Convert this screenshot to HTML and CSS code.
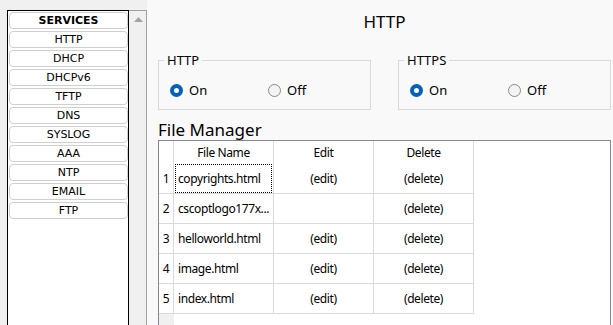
FILE: index.html
```html
<!DOCTYPE html>
<html lang="en">
<head>
    <meta charset="UTF-8">
    <title>HTTP Services</title>
    <link rel="stylesheet" href="styles.css">
</head>
<body>

    <div class="page">
        <div class="side">
            <div class="svc">
                <div class="svc-btn svc-head">SERVICES</div>
                <div class="svc-btn">HTTP</div>
                <div class="svc-btn">DHCP</div>
                <div class="svc-btn">DHCPv6</div>
                <div class="svc-btn">TFTP</div>
                <div class="svc-btn">DNS</div>
                <div class="svc-btn">SYSLOG</div>
                <div class="svc-btn">AAA</div>
                <div class="svc-btn">NTP</div>
                <div class="svc-btn">EMAIL</div>
                <div class="svc-btn">FTP</div>
            </div>
            <div class="scroll">
                <svg class="arrow" width="9" height="5" viewBox="0 0 9 5"><polygon points="4.5,0 9,5 0,5" fill="#a3a3a3"/></svg>
            </div>
        </div>

        <div class="content">
            <div class="title">HTTP</div>

            <div class="proto-row">
                <fieldset class="proto">
                    <legend>HTTP</legend>
                    <div class="radios">
                        <span class="opt opt-on"><span class="radio checked"></span>On</span>
                        <span class="opt"><span class="radio"></span>Off</span>
                    </div>
                </fieldset>
                <fieldset class="proto">
                    <legend>HTTPS</legend>
                    <div class="radios">
                        <span class="opt opt-on"><span class="radio checked"></span>On</span>
                        <span class="opt"><span class="radio"></span>Off</span>
                    </div>
                </fieldset>
            </div>

            <div class="fm-label">File Manager</div>
            <div class="fm-box">
                <div class="fm-row fm-header">
                    <div class="cell num"></div>
                    <div class="cell">File Name</div>
                    <div class="cell">Edit</div>
                    <div class="cell">Delete</div>
                </div>
                <div class="fm-row">
                    <div class="cell num">1</div>
                    <div class="cell name"><span class="focus">copyrights.html</span></div>
                    <div class="cell">(edit)</div>
                    <div class="cell">(delete)</div>
                </div>
                <div class="fm-row">
                    <div class="cell num">2</div>
                    <div class="cell name">cscoptlogo177x...</div>
                    <div class="cell"></div>
                    <div class="cell">(delete)</div>
                </div>
                <div class="fm-row">
                    <div class="cell num">3</div>
                    <div class="cell name">helloworld.html</div>
                    <div class="cell">(edit)</div>
                    <div class="cell">(delete)</div>
                </div>
                <div class="fm-row">
                    <div class="cell num">4</div>
                    <div class="cell name">image.html</div>
                    <div class="cell">(edit)</div>
                    <div class="cell">(delete)</div>
                </div>
                <div class="fm-row">
                    <div class="cell num">5</div>
                    <div class="cell name">index.html</div>
                    <div class="cell">(edit)</div>
                    <div class="cell">(delete)</div>
                </div>
                <div class="fm-rest"></div>
            </div>
        </div>
    </div>

</body>
</html>
```

FILE: styles.css
```css
/* Packet Tracer style services panel */
body {
    margin: 0;
    font-family: "Noto Sans", sans-serif;
    color: #000;
    background: #f9f9f9;
}

.page {
    display: flex;
    height: 325px;
    overflow: hidden;
}

/* Left service list */
.side {
    display: flex;
    align-items: flex-start;
    padding: 10px 0 0 7px;
    background: #f0f0f0;
}

.svc {
    width: 120px;
    height: 400px;
    padding-top: 1px;
    border: 1px solid #000;
    background: #fff;
    box-sizing: content-box;
}

.svc-btn {
    width: 119px;
    height: 17px;
    margin: 0 0 2px 1px;
    box-sizing: border-box;
    border: 1px solid #cfcfcf;
    border-radius: 4px;
    background: #fff;
    font-family: "DejaVu Sans", sans-serif;
    font-size: 11px;
    line-height: 15px;
    text-align: center;
}

.svc-head {
    font-weight: bold;
}

.scroll {
    width: 17px;
    height: 400px;
    border-top: 1px solid #a0a0a0;
    border-right: 1px solid #a0a0a0;
    background: #f0f0f0;
    text-align: center;
}

.arrow {
    display: block;
    margin: 6px 0 0 5px;
}

/* Right content */
.content {
    flex: 1;
    padding: 12px 3px 0 11px;
    background: #f9f9f9;
}

.title {
    font-size: 17px;
    line-height: 20px;
    text-align: center;
}

.proto-row {
    display: flex;
    gap: 27px;
    margin-top: 20px;
}

.proto {
    width: 213px;
    box-sizing: border-box;
    margin: 0;
    padding: 0 0 12px 11px;
    border: 1px solid #d9d9d9;
}

.proto legend {
    padding: 0 3px;
    margin-left: -6px;
    font-size: 13px;
    line-height: 16px;
}

.radios {
    display: flex;
    margin-top: 15px;
    font-size: 13px;
    line-height: 14px;
}

.opt {
    display: flex;
    align-items: center;
    gap: 6px;
}

.opt-on {
    width: 98px;
}

.radio {
    width: 13px;
    height: 13px;
    box-sizing: border-box;
    border: 1px solid #8a8a8a;
    border-radius: 50%;
    background: #f3f3f3;
}

.radio.checked {
    border: 4px solid #005fb8;
    background: #fff;
}

/* File manager */
.fm-label {
    margin-top: 10px;
    font-size: 17px;
    line-height: 20px;
}

.fm-box {
    height: 200px;
    border: 1px solid #828790;
    background: #fff;
}

.fm-row {
    display: grid;
    grid-template-columns: 15px 100px 100px 100px;
    height: 30px;
    font-size: 12px;
    letter-spacing: -0.4px;
}

.fm-header {
    height: 23px;
}

.cell {
    display: flex;
    align-items: center;
    justify-content: center;
    box-sizing: border-box;
    border-right: 1px solid #dadada;
    border-bottom: 1px solid #dadada;
    white-space: nowrap;
}

.fm-header .cell {
    border-bottom: none;
}

.cell.name {
    justify-content: flex-start;
    padding-left: 4px;
}

.focus {
    display: flex;
    align-items: center;
    width: 97px;
    height: 29px;
    margin-left: -3px;
    padding-left: 2px;
    box-sizing: border-box;
    border: 1px dotted #000;
}

.fm-rest {
    width: 15px;
    height: 100px;
    background: #f0f0f0;
}
```
